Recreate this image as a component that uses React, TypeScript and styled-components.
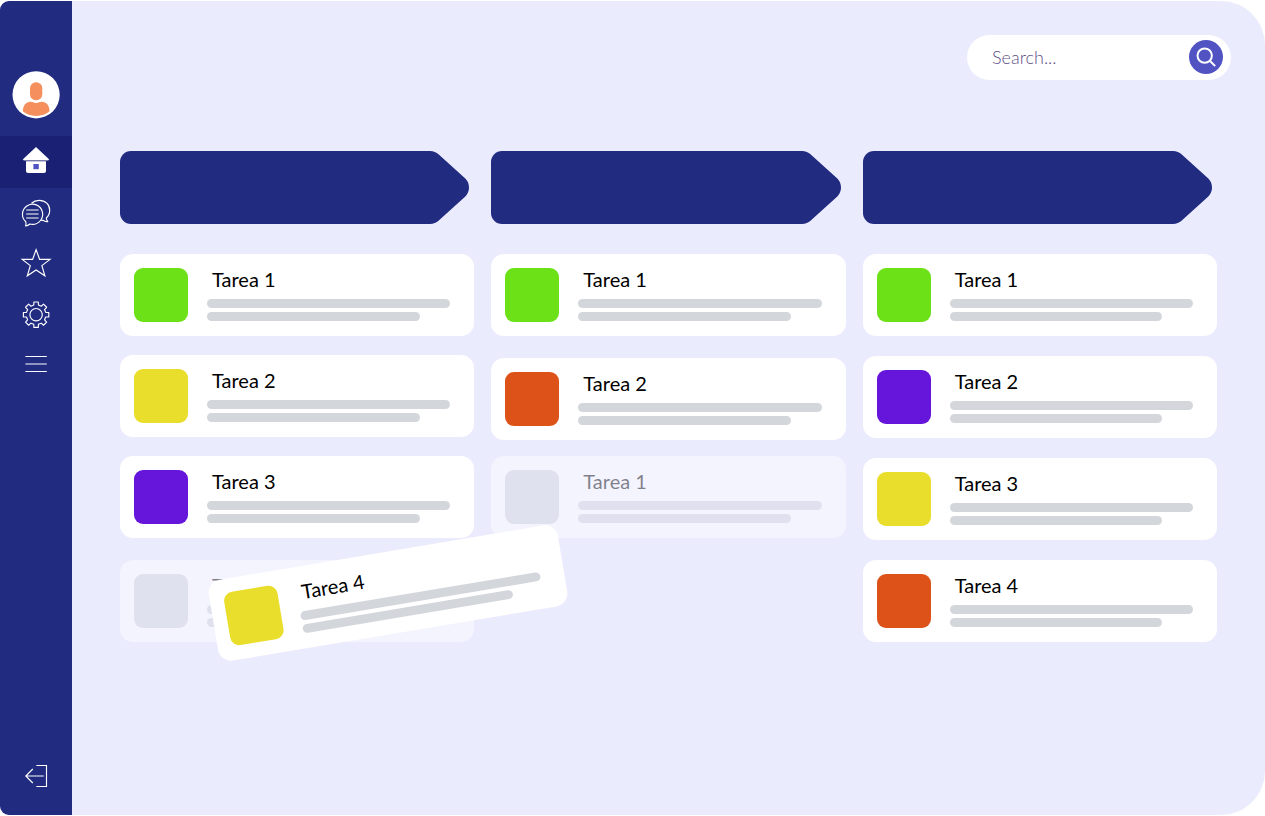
import React from "react";
import styled, { createGlobalStyle, css } from "styled-components";

const color = {
  navy: "#212b80",
  navyDark: "#1a2074",
  canvas: "#ebebfe",
  accent: "#5053c1",
  bar: "#d3d7dc",
  green: "#6de117",
  yellow: "#e9de2b",
  purple: "#6615db",
  orange: "#dc5219",
};

const GlobalStyle = createGlobalStyle`
  *, *::before, *::after { box-sizing: border-box; }
  body {
    margin: 0;
    background: #fff;
    font-family: Lato, "Noto Sans", sans-serif;
  }
`;

const Frame = styled.div`
  display: flex;
  min-height: calc(100vh - 2px);
  margin: 1px 0;
  border-radius: 9px 44px 44px 9px;
  background: ${color.canvas};
  overflow: hidden;
`;

const Sidebar = styled.aside`
  display: flex;
  flex-direction: column;
  flex: none;
  width: 72px;
  padding: 70px 0 14px;
  background: ${color.navy};
`;

const Avatar = styled.svg`
  display: block;
  width: 48px;
  height: 48px;
  margin: 0 auto 17px;
`;

const Nav = styled.nav`
  display: flex;
  flex-direction: column;
  flex: 1;
`;

const NavButton = styled.button<{ $active?: boolean; $last?: boolean }>`
  display: flex;
  align-items: center;
  justify-content: center;
  width: 100%;
  height: ${(p) => (p.$active ? 52 : 50)}px;
  margin: 0;
  padding: 0;
  border: 0;
  background: ${(p) => (p.$active ? color.navyDark : "transparent")};
  cursor: pointer;
  ${(p) =>
    p.$last &&
    css`
      margin-top: auto;
    `}
`;

const Icon = styled.svg`
  display: block;
  width: 32px;
  height: 32px;
  fill: none;
  stroke: #fff;
  stroke-width: 1.15;
  stroke-linejoin: round;
`;

const Main = styled.main`
  flex: 1;
  min-width: 0;
`;

const TopBar = styled.header`
  display: flex;
  justify-content: flex-end;
  padding: 34px 34px 0 0;
`;

const SearchForm = styled.form`
  display: flex;
  align-items: center;
  width: 264px;
  height: 45px;
  padding: 0 8px 2px 25px;
  border-radius: 23px;
  background: #fff;
`;

const SearchInput = styled.input`
  flex: 1;
  min-width: 0;
  height: 32px;
  padding: 0;
  border: 0;
  outline: 0;
  background: transparent;
  color: #5f4f86;
  font-family: Lato, sans-serif;
  font-size: 18px;
  font-weight: 300;
  &::placeholder {
    color: #5f4f86;
    opacity: 1;
  }
`;

const SearchButton = styled.button`
  display: block;
  width: 34px;
  height: 34px;
  padding: 0;
  border: 0;
  border-radius: 50%;
  background: ${color.accent};
  cursor: pointer;
  svg {
    display: block;
  }
`;

const Board = styled.div`
  display: grid;
  grid-template-columns: repeat(3, minmax(0, 1fr));
  column-gap: 17px;
  padding: 71px 48px 48px;
`;

const Column = styled.section`
  min-width: 0;
`;

const ColumnHeader = styled.div`
  display: flex;
  height: 73px;
  margin: 0 5px 30px 0;
`;

const HeaderBody = styled.div`
  flex: 1;
  border-radius: 11px 0 0 11px;
  background: ${color.navy};
`;

const HeaderTip = styled.svg`
  display: block;
  flex: none;
  width: 50px;
  height: 73px;
  margin-left: -2px;
`;

const Slot = styled.div<{ $gap: number }>`
  position: relative;
  margin-top: ${(p) => p.$gap}px;
`;

const Card = styled.article<{ $ghost?: boolean; $dragged?: boolean }>`
  display: flex;
  gap: 19px;
  width: 100%;
  height: 82px;
  padding: 14px;
  border-radius: 13px;
  background: #fff;
  opacity: ${(p) => (p.$ghost ? 0.45 : 1)};
  ${(p) =>
    p.$dragged &&
    css`
      position: absolute;
      left: 91px;
      top: -8px;
      z-index: 2;
      transform: rotate(-9.5deg);
    `}
`;

const Swatch = styled.div<{ $color: string }>`
  flex: none;
  width: 54px;
  height: 54px;
  border-radius: 9px;
  background: ${(p) => p.$color};
`;

const CardBody = styled.div`
  flex: 1;
  min-width: 0;
`;

const CardTitle = styled.h2`
  margin: 0 0 9px 5px;
  color: #000;
  font-size: 20px;
  font-weight: 400;
  line-height: 22px;
`;

const Line = styled.div<{ $short?: boolean }>`
  width: ${(p) => (p.$short ? 84 : 96)}%;
  height: 9px;
  margin-bottom: 4px;
  border-radius: 5px;
  background: ${color.bar};
`;

const gearPath = (cx: number, cy: number) => {
  const points: string[] = [];
  for (let i = 0; i < 8; i++) {
    const base = (i * Math.PI) / 4;
    const at = (r: number, a: number) =>
      `${(cx + r * Math.sin(base + a)).toFixed(2)} ${(cy - r * Math.cos(base + a)).toFixed(2)}`;
    points.push(at(9.9, -0.24), at(12.9, -0.17), at(12.9, 0.17), at(9.9, 0.24));
  }
  return `M${points.join("L")}Z`;
};

const HomeIcon = () => (
  <Icon viewBox="0 0 32 32" aria-hidden="true">
    <path d="M16 1.5 28.6 13.2Q29 14 28 14H4Q3 14 3.4 13.2Z" fill="#fff" stroke="#fff" strokeWidth="0.8" />
    <path d="M6 15.3H26V25Q26 27 24 27H8Q6 27 6 25Z" fill="#fff" stroke="none" />
    <rect x="13.4" y="18" width="5.4" height="5.2" fill={color.accent} stroke="none" />
  </Icon>
);

const ChatIcon = () => (
  <Icon viewBox="0 0 32 32" aria-hidden="true">
    <path d="M5.8 24.8A10.1 10.1 0 1 1 12.4 27.4Q11 27.4 9.8 27Q8 28.8 5.6 29Q6.4 27 5.8 24.8Z" />
    <path d="M11.5 6.2C13.6 4.3 16.4 3.3 19.2 3.3C25.4 3.3 29.7 7.6 29.7 13.2C29.7 16.4 28.4 19 26.3 21Q26.4 23.2 27.8 24.6Q25 24.9 23 23.3Q21.8 23.4 21.2 23.2" />
    <path d="M6.2 13H18.6M6.2 17H18.6M6.2 21H18.6" />
  </Icon>
);

const StarIcon = () => (
  <Icon viewBox="0 0 32 32" aria-hidden="true">
    <path
      strokeLinejoin="miter"
      d="M16.1 2.6 19.6 12.4H30L21.9 18.6 24.9 28.8 16.1 23 7.3 28.8 10.3 18.6 2.2 12.4H12.6Z"
    />
  </Icon>
);

const GearIcon = () => (
  <Icon viewBox="0 0 32 32" aria-hidden="true">
    <path d={gearPath(16.1, 17.7)} />
    <circle cx="16.1" cy="17.7" r="6.2" />
  </Icon>
);

const MenuIcon = () => (
  <Icon viewBox="0 0 32 32" aria-hidden="true">
    <path d="M5.4 9.5H26.8M5.4 17H26.8M5.4 24.5H26.8" />
  </Icon>
);

const ExitIcon = () => (
  <Icon viewBox="0 0 32 32" aria-hidden="true">
    <path strokeLinejoin="miter" d="M16.3 5.5H26.5V26.5H16.3M23.8 16H6M12.8 9 5.8 16 12.8 23" />
  </Icon>
);

type Task = { title: string; fill: string; gap: number; ghost?: boolean; dragged?: string };

const columns: { name: string; tasks: Task[] }[] = [
  {
    name: "Columna 1",
    tasks: [
      { title: "Tarea 1", fill: color.green, gap: 0 },
      { title: "Tarea 2", fill: color.yellow, gap: 19 },
      { title: "Tarea 3", fill: color.purple, gap: 19 },
      { title: "Tarea 4", fill: color.bar, gap: 22, ghost: true, dragged: color.yellow },
    ],
  },
  {
    name: "Columna 2",
    tasks: [
      { title: "Tarea 1", fill: color.green, gap: 0 },
      { title: "Tarea 2", fill: color.orange, gap: 22 },
      { title: "Tarea 1", fill: color.bar, gap: 16, ghost: true },
    ],
  },
  {
    name: "Columna 3",
    tasks: [
      { title: "Tarea 1", fill: color.green, gap: 0 },
      { title: "Tarea 2", fill: color.purple, gap: 20 },
      { title: "Tarea 3", fill: color.yellow, gap: 20 },
      { title: "Tarea 4", fill: color.orange, gap: 20 },
    ],
  },
];

type TaskCardProps = { title: string; fill: string; ghost?: boolean; dragged?: boolean };

const TaskCard = ({ title, fill, ghost, dragged }: TaskCardProps) => (
  <Card $ghost={ghost} $dragged={dragged}>
    <Swatch $color={fill} />
    <CardBody>
      <CardTitle>{title}</CardTitle>
      <Line />
      <Line $short />
    </CardBody>
  </Card>
);

export default function App() {
  return (
    <>
      <GlobalStyle />
      <Frame>
        <Sidebar>
          <Avatar viewBox="0 0 48 48" aria-hidden="true">
            <circle cx="24.1" cy="23.8" r="23.6" fill="#fff" />
            <rect x="18" y="11.3" width="12.3" height="18" rx="6" fill="#f68f5e" />
            <path
              d="M10.8 40.3C11 34.5 14 30.8 18.6 30.8C21 30.8 21.6 32 24.2 32C26.8 32 27.4 30.8 29.8 30.8C34.4 30.8 37.4 34.5 37.6 40.3C34 43.3 29.5 44.9 24.2 44.9C18.9 44.9 14.4 43.3 10.8 40.3Z"
              fill="#f68f5e"
            />
          </Avatar>
          <Nav>
            <NavButton type="button" $active aria-label="Inicio"><HomeIcon /></NavButton>
            <NavButton type="button" aria-label="Mensajes"><ChatIcon /></NavButton>
            <NavButton type="button" aria-label="Favoritos"><StarIcon /></NavButton>
            <NavButton type="button" aria-label="Ajustes"><GearIcon /></NavButton>
            <NavButton type="button" aria-label="Menú"><MenuIcon /></NavButton>
            <NavButton type="button" $last aria-label="Salir"><ExitIcon /></NavButton>
          </Nav>
        </Sidebar>
        <Main>
          <TopBar>
            <SearchForm role="search" onSubmit={(e) => e.preventDefault()}>
              <SearchInput type="text" placeholder="Search..." aria-label="Search" />
              <SearchButton type="submit" aria-label="Search">
                <svg width="34" height="34" viewBox="0 0 34 34" fill="none" stroke="#fff" strokeWidth="2">
                  <circle cx="15.7" cy="15.6" r="7.2" />
                  <path d="M20.8 20.7 26.2 26.1" />
                </svg>
              </SearchButton>
            </SearchForm>
          </TopBar>
          <Board>
            {columns.map((column) => (
              <Column key={column.name} aria-label={column.name}>
                <ColumnHeader>
                  <HeaderBody />
                  <HeaderTip viewBox="-2 0 50 73" fill={color.navy} aria-hidden="true">
                    <path d="M-2 0H9C12.5 0 15.5 1.3 17.5 3.2L44.3 27.6C46.8 30 48 33.2 48 36.5C48 39.8 46.8 43 44.3 45.4L17.5 69.8C15.5 71.7 12.5 73 9 73H-2Z" />
                  </HeaderTip>
                </ColumnHeader>
                {column.tasks.map((task, i) => (
                  <Slot key={i} $gap={task.gap}>
                    <TaskCard title={task.title} fill={task.fill} ghost={task.ghost} />
                    {task.dragged && <TaskCard title={task.title} fill={task.dragged} dragged />}
                  </Slot>
                ))}
              </Column>
            ))}
          </Board>
        </Main>
      </Frame>
    </>
  );
}
